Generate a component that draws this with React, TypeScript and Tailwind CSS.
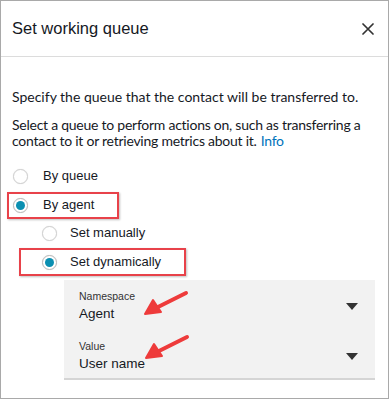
import React from 'react';

// 라디오 버튼 (선택/비선택)
const Radio: React.FC<{ checked?: boolean }> = ({ checked }) => (
  <span
    className={`flex h-[15px] w-[15px] shrink-0 items-center justify-center rounded-full border bg-white shadow-[0_0_1px_rgba(0,0,0,0.15)] ${
      checked ? 'border-[#b9b9b9]' : 'border-[#d0d0d0]'
    }`}
  >
    {checked && <span className="h-[9px] w-[9px] rounded-full bg-[#0b8fb1]" />}
  </span>
);

// 빨간 화살표 (주석)
const Arrow: React.FC<{ className: string }> = ({ className }) => (
  <svg className={className} width="48" height="28" viewBox="0 0 48 28" fill="none">
    <path d="M44 3 L14 18" stroke="#ee3b3b" strokeWidth="4" strokeLinecap="round" />
    <path d="M3 24 L11 10 L19 22 Z" fill="#ee3b3b" stroke="#ee3b3b" strokeWidth="2" strokeLinejoin="round" />
  </svg>
);

const Caret: React.FC = () => (
  <svg width="12" height="7" viewBox="0 0 12 7">
    <path d="M0 0 H12 L6 7 Z" fill="#333" />
  </svg>
);

const App: React.FC = () => {
  return (
    <div className="h-[400px] w-[390px] bg-white font-['Liberation_Sans',Arial,sans-serif] text-[#16191f]">
      <div className="flex h-[399px] w-[389px] flex-col border border-[#a9a9a9]">
        {/* 헤더 */}
        <div className="flex h-[56px] items-center justify-between border-b border-[#dcdcdc] pl-[11px] pr-[14px]">
          <h1 className="text-[16.5px] leading-none text-[#16191f]">Set working queue</h1>
          <svg width="12" height="12" viewBox="0 0 12 12">
            <path d="M1 1 L11 11 M11 1 L1 11" stroke="#333" strokeWidth="1.7" strokeLinecap="round" />
          </svg>
        </div>

        {/* 본문 */}
        <div className="flex flex-col px-[11px] pt-[31px]">
          <p className="font-['Lato',sans-serif] text-[14px] leading-[18px]">
            Specify the queue that the contact will be transferred to.
          </p>
          <p className="mt-[11px] font-['Lato',sans-serif] text-[14px] leading-[16px] tracking-[-0.25px]">
            Select a queue to perform actions on, such as transferring a contact to it or retrieving metrics about it.
            <span className="ml-[4px] inline-block h-[16px] align-top leading-[16px] text-[#0073bb]">Info</span>
          </p>

          <div className="mt-[14px] flex flex-col text-[13px]">
            <label className="flex h-[26px] items-center gap-[15px] pl-[1px]">
              <Radio />
              <span>By queue</span>
            </label>
            <div className="relative mt-[3px]">
              <label className="flex h-[26px] items-center gap-[15px] pl-[1px]">
                <Radio checked />
                <span>By agent</span>
              </label>
              <span className="absolute -left-[5px] top-0 h-[27px] w-[112px] border-2 border-[#e8424a] shadow-[1px_1px_2px_rgba(0,0,0,0.25)]" />
            </div>
            <label className="mt-[2px] flex h-[26px] items-center gap-[13px] pl-[30px]">
              <Radio />
              <span>Set manually</span>
            </label>
            <div className="relative mt-[3px]">
              <label className="flex h-[26px] items-center gap-[13px] pl-[30px]">
                <Radio checked />
                <span>Set dynamically</span>
              </label>
              <span className="absolute left-[7px] -top-[1px] h-[28px] w-[167px] border-2 border-[#e8424a] shadow-[1px_1px_2px_rgba(0,0,0,0.25)]" />
            </div>
          </div>

          {/* 드롭다운 패널 */}
          <div className="relative ml-[52px] mr-[2px] mt-[5px] flex flex-col border-b-2 border-[#d5d5d5] bg-[#f2f2f2] pb-[5px] pl-[15px] pr-[17px] pt-[9px]">
            <div className="flex items-center justify-between">
              <div className="flex flex-col">
                <span className="text-[10.5px] leading-[14px] text-[#333]">Namespace</span>
                <span className="mt-[2px] text-[13.5px] leading-[18px]">Agent</span>
              </div>
              <Caret />
            </div>
            <div className="mt-[16px] flex items-center justify-between">
              <div className="flex flex-col">
                <span className="text-[10.5px] leading-[14px] text-[#333]">Value</span>
                <span className="mt-[2px] text-[13.5px] leading-[18px]">User name</span>
              </div>
              <Caret />
            </div>
            <Arrow className="absolute left-[78px] top-[10px]" />
            <Arrow className="absolute left-[79px] top-[54px]" />
          </div>
        </div>
      </div>
    </div>
  );
};

export default App;
